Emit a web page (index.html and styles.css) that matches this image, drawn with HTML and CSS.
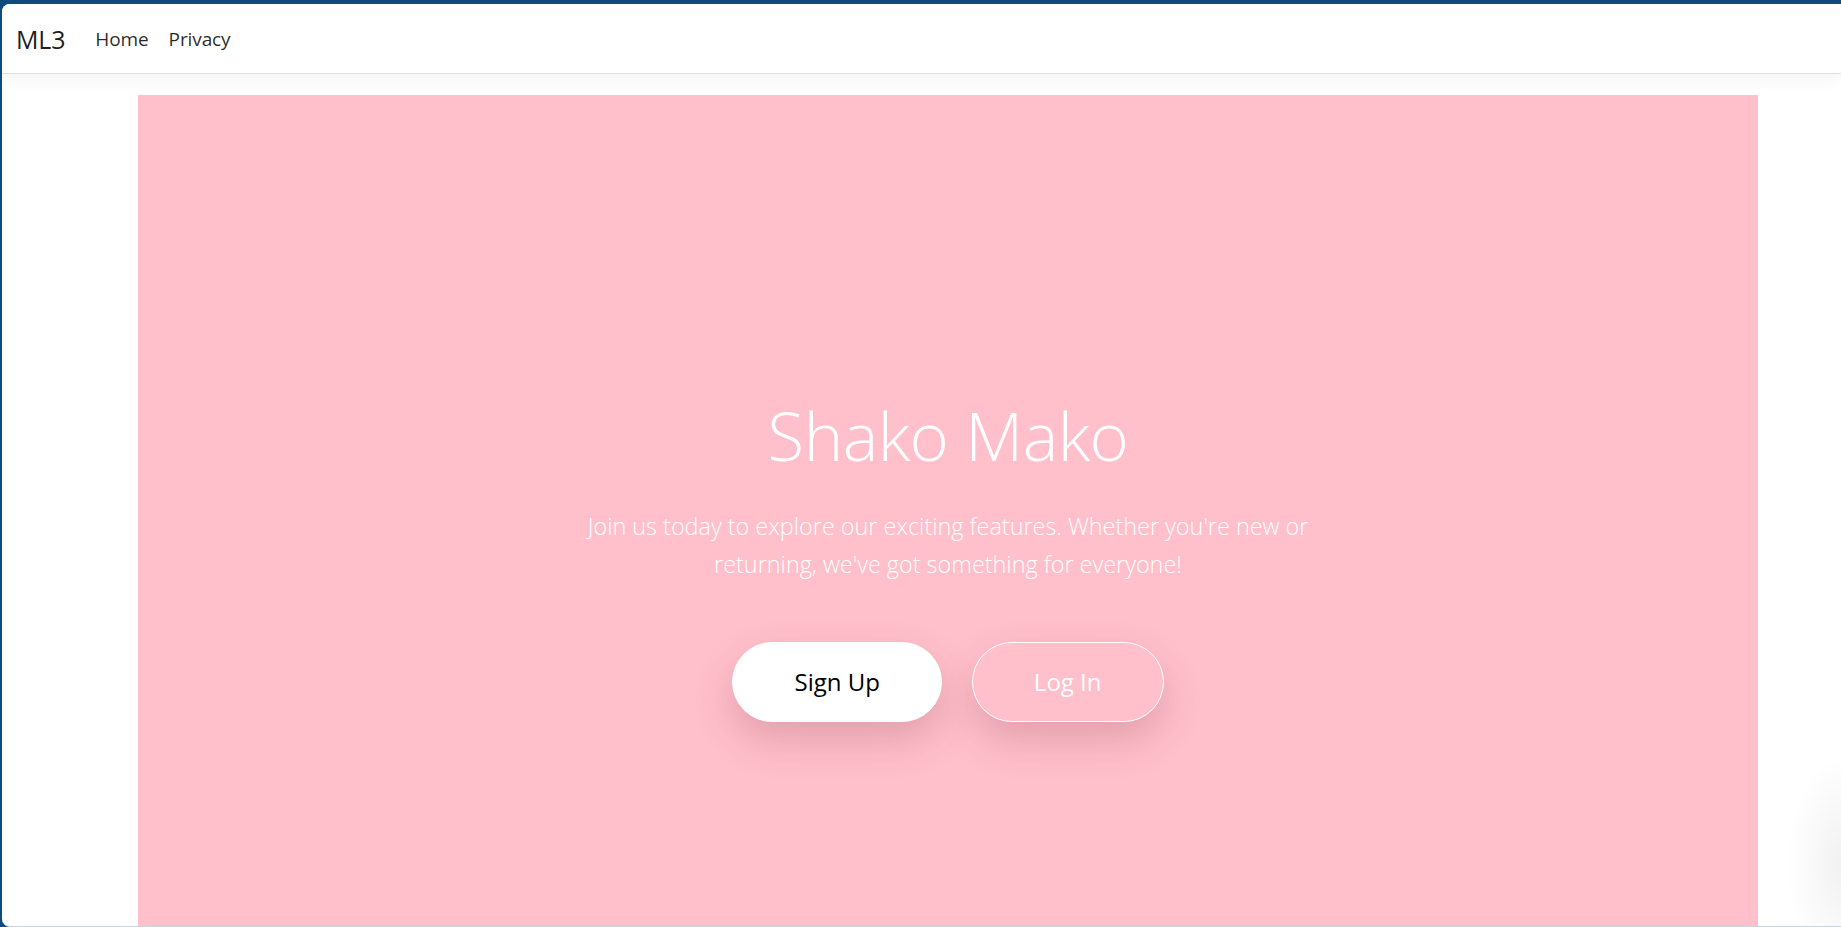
FILE: index.html
```html
<!DOCTYPE html>
<html lang="en">
<head>
<meta charset="utf-8">
<title>ML3</title>
<link rel="stylesheet" href="styles.css">
</head>
<body>
<div class="window">
  <header class="navbar">
    <a class="brand" href="#">ML3</a>
    <nav class="nav">
      <a class="nav-link" href="#">Home</a>
      <a class="nav-link" href="#">Privacy</a>
    </nav>
  </header>
  <main class="main">
    <section class="hero">
      <h1 class="title">Shako Mako</h1>
      <p class="lead">Join us today to explore our exciting features. Whether you're new or returning, we've got something for everyone!</p>
      <div class="actions">
        <a class="btn btn-light" href="#">Sign Up</a>
        <a class="btn btn-outline" href="#">Log In</a>
      </div>
    </section>
  </main>
</div>
</body>
</html>
```

FILE: styles.css
```css
html, body {
  margin: 0;
  padding: 0;
  height: 100%;
  overflow: hidden;
}
body {
  background: #0f4b7b;
  font-family: "Open Sans", "Noto Sans", "Liberation Sans", sans-serif;
}
.window {
  margin: 4px 0 0 2px;
  height: 922px;
  border-bottom: 1px solid #c9d3dd;
  border-radius: 8px 0 0 8px;
  background: radial-gradient(ellipse 60px 110px at 1845px 860px, rgba(0,0,0,0.06), rgba(0,0,0,0) 100%), #ffffff;
  overflow: hidden;
  box-shadow: inset 0 1px 0 #d7e4ef;
}
.navbar {
  height: 69px;
  display: flex;
  align-items: center;
  padding: 0 14px;
  border-bottom: 1px solid #dfe0e6;
  box-shadow: 0 6px 14px rgba(0,0,0,0.045);
  background: #fff;
  position: relative;
}
.brand {
  font-size: 25px;
  color: rgba(0,0,0,0.9);
  text-decoration: none;
  margin-right: 20px;
  letter-spacing: -0.2px;
}
.nav {
  display: flex;
}
.nav-link {
  font-size: 19px;
  color: rgba(0,0,0,0.85);
  text-decoration: none;
  padding: 0 10px;
  letter-spacing: -0.1px;
}
.main {
  padding: 21px 0 0 136px;
}
.hero {
  width: 1620px;
  height: 927px;
  background: #ffc0cb;
  display: flex;
  flex-direction: column;
  align-items: center;
  justify-content: center;
  text-align: center;
  color: #fff;
}
.title {
  margin: 0;
  font-size: 67px;
  font-weight: 300;
  line-height: 80px;
  letter-spacing: -0.5px;
}
.lead {
  margin: 32px 0 0;
  max-width: 760px;
  font-size: 23.4px;
  font-weight: 300;
  line-height: 38px;
}
.actions {
  display: flex;
  gap: 30px;
  margin-top: 59px;
}
.btn {
  display: inline-block;
  font-size: 24px;
  line-height: 36px;
  padding: 21px 61px;
  border-radius: 40px;
  border: 1px solid #fff;
  text-decoration: none;
  box-shadow: 0 18px 40px rgba(110,30,50,0.2);
}
.btn-light {
  background: #fff;
  color: #000;
}
.btn-outline {
  background: transparent;
  color: #fff;
}
```
